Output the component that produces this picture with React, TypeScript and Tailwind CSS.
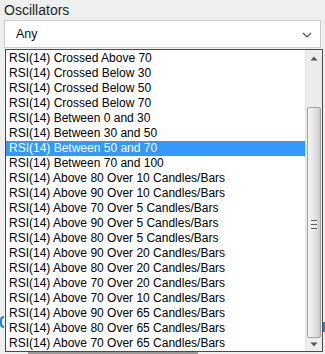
import React from "react";

const items = [
  "RSI(14) Crossed Above 70",
  "RSI(14) Crossed Below 30",
  "RSI(14) Crossed Below 50",
  "RSI(14) Crossed Below 70",
  "RSI(14) Between 0 and 30",
  "RSI(14) Between 30 and 50",
  "RSI(14) Between 50 and 70",
  "RSI(14) Between 70 and 100",
  "RSI(14) Above 80 Over 10 Candles/Bars",
  "RSI(14) Above 90 Over 10 Candles/Bars",
  "RSI(14) Above 70 Over 5 Candles/Bars",
  "RSI(14) Above 90 Over 5 Candles/Bars",
  "RSI(14) Above 80 Over 5 Candles/Bars",
  "RSI(14) Above 90 Over 20 Candles/Bars",
  "RSI(14) Above 80 Over 20 Candles/Bars",
  "RSI(14) Above 70 Over 20 Candles/Bars",
  "RSI(14) Above 70 Over 10 Candles/Bars",
  "RSI(14) Above 90 Over 65 Candles/Bars",
  "RSI(14) Above 80 Over 65 Candles/Bars",
  "RSI(14) Above 70 Over 65 Candles/Bars",
];

export default function App() {
  return (
    <div className="relative w-[325px] h-[354px] overflow-hidden bg-[#eef0f0] font-['Liberation_Sans',Arial,sans-serif]">
      <div className="px-[4px] pt-[1px]">
        <div className="text-[14px] leading-[18px] text-[#1e1e1e]">Oscillators</div>
        <div className="mt-[1px] h-[28px] border border-[#cbcbcb] bg-white flex items-center justify-between pl-[11px] pr-[8px]">
          <span className="text-[12.5px] text-[#111]">Any</span>
          <svg width="10" height="6" viewBox="0 0 10 6" className="mt-[1px]">
            <path d="M1 1 L5 5 L9 1" fill="none" stroke="#4a4a4a" strokeWidth="1.1" />
          </svg>
        </div>
      </div>

      {/* background fragments peeking around the list */}
      <div className="absolute left-0 top-[316px] w-[4px] h-[12px] border-[2px] border-r-0 border-[#2a7fd4] rounded-l-[4px]" />
      <div className="absolute left-[323px] top-[322px] w-[2px] h-[10px] bg-[#2a7fd4]" />
      <div className="absolute left-[28px] top-[352px] w-[170px] h-[2px] bg-[#9a9a9a]" />

      {/* open listbox */}
      <div className="absolute left-[5px] top-[49px] w-[318px] h-[303px] border border-[#4a4a4a] bg-white flex">
        <div className="flex-1 pt-[1px]">
          {items.map((t, i) => (
            <div
              key={i}
              className={
                i === 6
                  ? "h-[15px] leading-[15px] text-[12px] pl-[3px] bg-[#3399ff] text-white whitespace-nowrap"
                  : "h-[15px] leading-[15px] text-[12px] pl-[3px] text-[#000] whitespace-nowrap"
              }
            >
              {t}
            </div>
          ))}
        </div>
        <div className="w-[17px] h-full bg-[#ececec] flex flex-col items-center border-l border-[#e4e4e4]">
          <div className="h-[17px] w-full flex items-center justify-center">
            <svg width="8" height="5" viewBox="0 0 8 5">
              <path d="M0.5 4.5 L4 0.5 L7.5 4.5 Z" fill="#555" />
            </svg>
          </div>
          <div className="h-[40px]" />
          <div className="w-[14px] h-[231px] rounded-[2px] border border-[#a2a2a2] bg-[linear-gradient(to_right,#f4f4f4,#e6e6e6_50%,#cdcdcd)] flex items-center justify-center">
            <div className="flex flex-col gap-[1px] mt-[4px]">
              <div className="w-[6px] h-[1px] bg-[#606060]" />
              <div className="w-[6px] h-[1px] bg-[#ffffff]" />
              <div className="w-[6px] h-[1px] bg-[#606060]" />
              <div className="w-[6px] h-[1px] bg-[#ffffff]" />
              <div className="w-[6px] h-[1px] bg-[#606060]" />
            </div>
          </div>
          <div className="flex-1 w-full flex items-center justify-center">
            <svg width="8" height="5" viewBox="0 0 8 5">
              <path d="M0.5 0.5 L4 4.5 L7.5 0.5 Z" fill="#555" />
            </svg>
          </div>
        </div>
      </div>
    </div>
  );
}
